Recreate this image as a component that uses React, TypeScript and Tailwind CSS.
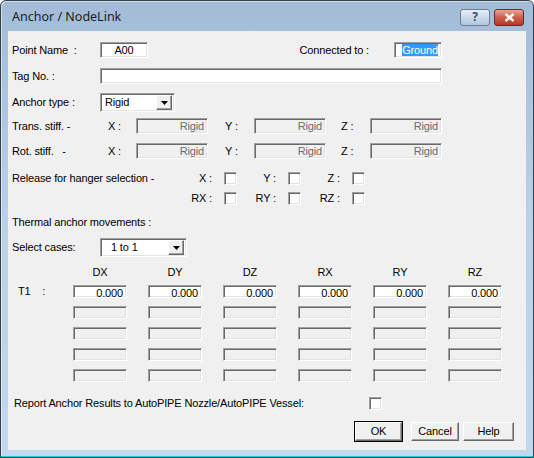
import React from "react";

const sunken =
  "box-border border border-t-[#a0a0a0] border-l-[#a0a0a0] border-r-white border-b-white shadow-[inset_1px_1px_0_#696969,inset_-1px_-1px_0_#e3e3e3]";
const raised =
  "box-border border border-t-white border-l-white border-r-[#696969] border-b-[#696969] shadow-[inset_-1px_-1px_0_#a0a0a0] bg-[#f0f0f0]";

function Field({
  w,
  h = "h-[16px]",
  value,
  disabled,
  align = "text-right",
}: {
  w: string;
  h?: string;
  value?: React.ReactNode;
  disabled?: boolean;
  align?: string;
}) {
  return (
    <div
      className={`${sunken} ${w} ${h} ${align} ${
        disabled ? "bg-[#f0f0f0] text-[#6d6d6d]" : "bg-white text-black"
      } px-[3px] leading-[12px] pt-[1px] overflow-hidden whitespace-nowrap`}
    >
      {value}
    </div>
  );
}

function Check() {
  return <div className={`${sunken} w-[13px] h-[13px] bg-white`} />;
}

function Combo({ w, value, pl }: { w: string; value: string; pl: string }) {
  return (
    <div className={`${sunken} ${w} h-[19px] bg-white flex items-center p-[2px]`}>
      <span className={`flex-1 ${pl}`}>{value}</span>
      <div className={`${raised} w-[16px] h-[15px] flex items-center justify-center`}>
        <svg width="7" height="4" viewBox="0 0 7 4">
          <path d="M0 0h7L3.5 4z" fill="#000" />
        </svg>
      </div>
    </div>
  );
}

function Btn({ w, label }: { w: string; label: string }) {
  return (
    <div className={`${raised} ${w} h-[19px] flex items-center justify-center`}>{label}</div>
  );
}

export default function App() {
  const heads = ["DX", "DY", "DZ", "RX", "RY", "RZ"];
  return (
    <div className="w-[534px] h-[458px] box-border flex flex-col bg-linear-to-b from-[#a2bcd8] via-[#bad1ea] to-[#c2d8ef] border border-[#34404c] rounded-t-[6px] overflow-hidden shadow-[inset_1px_1px_0_rgba(255,255,255,0.5)]">
      <div className="h-[30px] flex items-center pl-[11px] pr-[9px] font-['Noto_Sans',sans-serif] text-[12.5px] text-[#1b1b1b]">
        <span className="pt-[2px]">Anchor / NodeLink</span>
        <div className="ml-auto flex gap-[4px] pt-[2px]">
          <div className="w-[30px] h-[17px] rounded-[3px] border border-[#6a7f97] bg-linear-to-b from-[#e8eff7] via-[#cad9ea] to-[#b0c6de] flex items-center justify-center text-[12px] font-bold text-[#3a4d66] leading-none">
            ?
          </div>
          <div className="w-[30px] h-[17px] rounded-[3px] border border-[#6e2a22] bg-linear-to-b from-[#e8a393] via-[#cc5d4a] to-[#b53a26] flex items-center justify-center">
            <svg width="11" height="9" viewBox="0 0 11 9">
              <path d="M1.5 1L9.5 8M9.5 1L1.5 8" stroke="#fff" strokeWidth="2.4" />
            </svg>
          </div>
        </div>
      </div>
      <div className="pl-[7px]">
        <div className="w-[518px] h-[419px] bg-[#f0f0f0] font-['Liberation_Sans',sans-serif] text-[11px] tracking-[-0.15px] leading-[13px] text-black pl-[4px] pt-[11px] flex flex-col whitespace-pre">
          <div className="flex items-center h-[16px]">
            <span className="w-[88px]">Point Name  :</span>
            <Field w="w-[48px]" value="A00" align="text-center" />
            <span className="w-[246px] text-right pr-[25px]">Connected to :</span>
            <Field
              w="w-[48px]"
              align="text-right"
              value={<span className="bg-[#3399ff] text-white">Ground</span>}
            />
          </div>
          <div className="flex items-center h-[16px] mt-[10px]">
            <span className="w-[88px]">Tag No. :</span>
            <Field w="w-[342px]" />
          </div>
          <div className="flex items-center h-[19px] mt-[9px]">
            <span className="w-[88px]">Anchor type :</span>
            <Combo w="w-[75px]" value="Rigid" pl="pl-[2px]" />
          </div>
          {["Trans. stiff. -", "Rot. stiff.   -"].map((lbl, i) => (
            <div key={lbl} className={`flex items-center h-[16px] ${i === 0 ? "mt-[6px]" : "mt-[9px]"}`}>
              <span className="w-[96px]">{lbl}</span>
              <span className="w-[28px]">X :</span>
              <Field w="w-[72px]" value="Rigid" disabled />
              <span className="w-[17px]" />
              <span className="w-[29px]">Y :</span>
              <Field w="w-[72px]" value="Rigid" disabled />
              <span className="w-[15px]" />
              <span className="w-[29px]">Z :</span>
              <Field w="w-[72px]" value="Rigid" disabled />
            </div>
          ))}
          <div className="flex items-center h-[13px] mt-[13px]">
            <div className="w-[212px] flex">
              <span>Release for hanger selection -</span>
              <span className="ml-auto pr-[12px]">X :</span>
            </div>
            <Check />
            <span className="w-[51px] text-right pr-[12px]">Y :</span>
            <Check />
            <span className="w-[51px] text-right pr-[12px]">Z :</span>
            <Check />
          </div>
          <div className="flex items-center h-[13px] mt-[7px]">
            <span className="w-[212px] text-right pr-[12px]">RX :</span>
            <Check />
            <span className="w-[51px] text-right pr-[12px]">RY :</span>
            <Check />
            <span className="w-[51px] text-right pr-[12px]">RZ :</span>
            <Check />
          </div>
          <div className="flex items-center h-[14px] mt-[10px]">
            <span>Thermal anchor movements :</span>
          </div>
          <div className="flex items-center h-[19px] mt-[9px]">
            <span className="w-[88px]">Select cases:</span>
            <Combo w="w-[87px]" value="1 to 1" pl="pl-[8px]" />
          </div>
          <div className="flex items-center h-[14px] mt-[8px] pl-[61px] gap-[21px]">
            {heads.map((h) => (
              <span key={h} className="w-[54px] text-center">
                {h}
              </span>
            ))}
          </div>
          {[0, 1, 2, 3, 4].map((r) => (
            <div key={r} className={`flex items-center h-[13px] ${r === 0 ? "mt-[6px]" : "mt-[8px]"}`}>
              <span className="w-[61px] pl-[6px]">{r === 0 ? "T1    :" : ""}</span>
              <div className="flex gap-[21px]">
                {heads.map((h) => (
                  <Field
                    key={h}
                    w="w-[54px]"
                    h="h-[13px]"
                    disabled={r !== 0}
                    value={r === 0 ? "0.000" : ""}
                  />
                ))}
              </div>
            </div>
          ))}
          <div className="flex items-center h-[13px] mt-[15px]">
            <span className="w-[357px] pl-[2px]">Report Anchor Results to AutoPIPE Nozzle/AutoPIPE Vessel:</span>
            <Check />
          </div>
          <div className="flex items-center h-[19px] mt-[12px] pl-[342px]">
            <div className="border border-black">
              <Btn w="w-[47px] h-[17px]" label="OK" />
            </div>
            <div className="ml-[8px]">
              <Btn w="w-[48px]" label="Cancel" />
            </div>
            <div className="ml-[4px]">
              <Btn w="w-[51px]" label="Help" />
            </div>
          </div>
        </div>
      </div>
      <div className="flex-1 border-b border-[#27c4e4]" />
    </div>
  );
}
